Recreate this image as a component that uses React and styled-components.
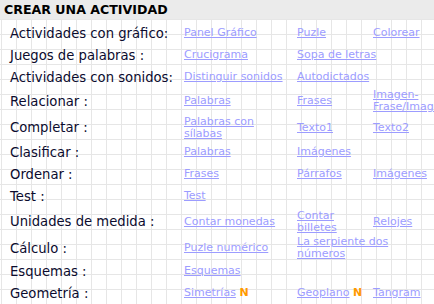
import styled, { createGlobalStyle } from "styled-components";

const Global = createGlobalStyle`
    html, body {
        margin: 0;
        padding: 0;
        background: #fff;
    }
`;

const rows = [
    { label: "Actividades con gráfico:", h: 22, links: [["Panel Gráfico"], ["Puzle"], ["Colorear"]] },
    { label: "Juegos de palabras :", h: 22, links: [["Crucigrama"], ["Sopa de letras"]] },
    { label: "Actividades con sonidos:", h: 22, links: [["Distinguir sonidos"], ["Autodictados"]] },
    { label: "Relacionar :", h: 26, links: [["Palabras"], ["Frases"], ["Imagen-", "Frase/Imagen"]] },
    { label: "Completar :", h: 27, links: [["Palabras con", "sílabas"], ["Texto1"], ["Texto2"]] },
    { label: "Clasificar :", h: 22, links: [["Palabras"], ["Imágenes"]] },
    { label: "Ordenar :", h: 22, links: [["Frases"], ["Párrafos"], ["Imágenes"]] },
    { label: "Test :", h: 22, links: [["Test"]] },
    { label: "Unidades de medida :", h: 29, links: [["Contar monedas"], ["Contar", "billetes"], ["Relojes"]] },
    { label: "Cálculo :", h: 24, links: [["Puzle numérico"], ["La serpiente dos", "números"]] },
    { label: "Esquemas :", h: 22, links: [["Esquemas"]] },
    { label: "Geometría :", h: 22, links: [["Simetrías", true], ["Geoplano", true], ["Tangram"]] },
];

export default function App() {
    return (
        <Page>
            <Global />
            <Header>CREAR UNA ACTIVIDAD</Header>
            <Table>
                {rows.map((r) => (
                    <Row key={r.label} $h={r.h}>
                        <Label>{r.label}</Label>
                        {r.links.map((l, i) => (
                            <Cell key={i}>
                                {l[1] === true ? (
                                    <>
                                        <Link href="#">{l[0]}</Link> <New>N</New>
                                    </>
                                ) : (
                                    <Link href="#">
                                        {l[0]}
                                        {l[1] && <br />}
                                        {l[1]}
                                    </Link>
                                )}
                            </Cell>
                        ))}
                    </Row>
                ))}
            </Table>
        </Page>
    );
}

const Page = styled.div`
    width: 434px;
    height: 304px;
    overflow: hidden;
    background-color: #fff;
    background-image:
        linear-gradient(#e6e6e6 1px, transparent 1px),
        linear-gradient(90deg, #e6e6e6 1px, transparent 1px);
    background-size: 15px 15px;
    background-position: 1px 4px;
    font-family: "DejaVu Sans", Verdana, sans-serif;
`;

const Header = styled.div`
    height: 19px;
    line-height: 20px;
    padding-left: 4px;
    background: #ebebeb;
    color: #000;
    font-weight: bold;
    font-size: 12.6px;
    white-space: nowrap;
`;

const Table = styled.div`
    padding-top: 3px;
`;

const Row = styled.div`
    display: grid;
    grid-template-columns: 174px 113px 76px 120px;
    align-items: center;
    height: ${(p) => p.$h}px;
    padding-left: 10px;
    white-space: nowrap;
`;

const Label = styled.div`
    font-size: 13.2px;
    color: #0b0b2e;
`;

const Cell = styled.div`
    font-size: 11px;
    line-height: 12px;
`;

const Link = styled.a`
    color: #9c9cff;
    text-decoration: underline;
`;

const New = styled.span`
    color: #ff9900;
    font-weight: bold;
    font-size: 11px;
`;
